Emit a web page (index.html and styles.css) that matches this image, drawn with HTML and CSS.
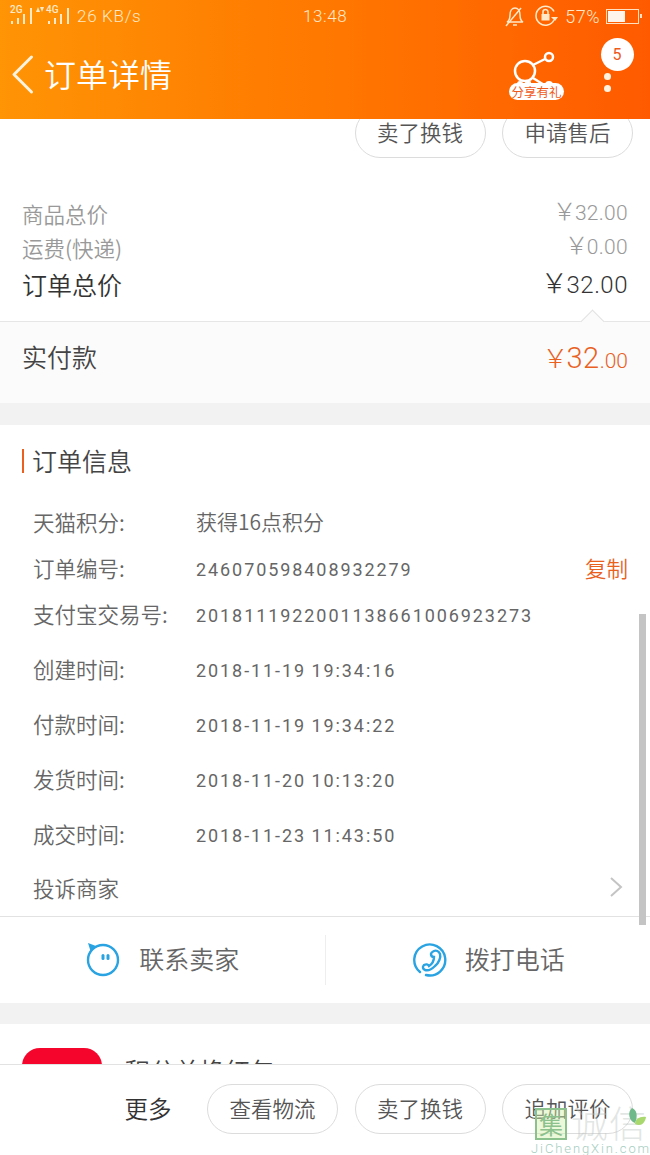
FILE: index.html
```html
<!DOCTYPE html>
<html lang="zh">
<head>
<meta charset="utf-8">
<title>订单详情</title>
<link rel="stylesheet" href="styles.css">
</head>
<body>
<div class="page">
  <header class="header">
    <div class="status">
      <svg class="signal" width="66" height="26" viewBox="0 0 66 26" fill="#ffe9c8">
        <text x="2" y="13" class="tiny">2G</text>
        <rect x="3" y="21" width="2" height="3"/><rect x="9" y="18" width="2" height="6"/><rect x="15" y="14" width="2" height="10"/><rect x="22" y="8" width="2" height="16"/>
        <path d="M28 12l2-5 2 5zM32 7l2 5 2-5z"/>
        <text x="38" y="13" class="tiny">4G</text>
        <rect x="40" y="21" width="2" height="3"/><rect x="46" y="18" width="2" height="6"/><rect x="52" y="14" width="2" height="10"/><rect x="59" y="8" width="2" height="16"/>
      </svg>
      <span class="speed">26 KB/s</span>
      <span class="clock">13:48</span>
      <svg class="bell" width="22" height="22" viewBox="0 0 22 22" fill="none" stroke="#ffe9c8" stroke-width="1.5">
        <path d="M3 17c2-1 3-3 3-7 0-4 2-7 5-7s5 3 5 7c0 4 1 6 3 7z"/><path d="M9 20h4"/><path d="M2 21L17 3"/>
      </svg>
      <svg class="lock" width="24" height="22" viewBox="0 0 24 22" fill="none" stroke="#ffe9c8" stroke-width="1.6">
        <path d="M19 15a9.500 9.500 0 1 1 0-8.500"/><path d="M16 12l4 4 3-4z" fill="#ffe9c8" stroke="none"/>
        <rect x="6.500" y="9" width="8" height="6.500" fill="#ffe9c8" stroke="none"/><path d="M8 9V7a2.500 2.500 0 0 1 5 0v2"/>
      </svg>
      <span class="battery-text">57%</span>
      <span class="battery"><span class="battery-fill"></span></span>
    </div>
    <div class="nav">
      <svg class="back" width="24" height="42" viewBox="0 0 24 42" fill="none" stroke="#fff3e0" stroke-width="3" stroke-linecap="round" stroke-linejoin="round">
        <path d="M20.500 3L3 20.500 20.500 38"/>
      </svg>
      <h1 class="nav-title">订单详情</h1>
      <div class="share">
        <svg width="56" height="52" viewBox="0 0 56 52" fill="none" stroke="#fff" stroke-width="2.500">
          <circle cx="17" cy="23" r="10"/><circle cx="41" cy="9" r="4"/><path d="M25 17l12-6"/><path d="M25 30l12 7.500"/>
          <circle cx="41" cy="37" r="4" fill="#fff" stroke="none"/><circle cx="12" cy="36" r="3" fill="#fff" stroke="none"/><circle cx="20" cy="35" r="3" fill="#fff" stroke="none"/>
        </svg>
        <span class="share-label">分享有礼</span>
      </div>
      <div class="more">
        <span class="more-badge">5</span>
        <span class="dot"></span>
        <span class="dot"></span>
      </div>
    </div>
  </header>

  <main class="content">
    <div class="top-buttons">
      <span class="pill">卖了换钱</span>
      <span class="pill">申请售后</span>
    </div>

    <section class="prices">
      <div class="price-row muted r1"><span>商品总价</span><span class="amount"><i class="yen">￥</i>32.00</span></div>
      <div class="price-row muted r2"><span>运费(快递)</span><span class="amount"><i class="yen">￥</i>0.00</span></div>
      <div class="price-row total r3"><span>订单总价</span><span class="amount big"><i class="yen">￥</i>32.00</span></div>
    </section>

    <section class="paid">
      <span class="caret"></span>
      <span class="paid-label">实付款</span>
      <span class="paid-amount"><i class="yen">￥</i><b>32</b><em>.00</em></span>
    </section>

    <div class="gap"></div>

    <section class="info">
      <h2 class="info-title">订单信息</h2>
      <div class="info-row h46"><span class="key">天猫积分:</span><span class="val">获得16点积分</span></div>
      <div class="info-row h46"><span class="key">订单编号:</span><span class="val num">246070598408932279</span><span class="copy">复制</span></div>
      <div class="info-row h46"><span class="key">支付宝交易号:</span><span class="val num">2018111922001138661006923273</span></div>
      <div class="info-row h55 first"><span class="key">创建时间:</span><span class="val num">2018-11-19 19:34:16</span></div>
      <div class="info-row h55"><span class="key">付款时间:</span><span class="val num">2018-11-19 19:34:22</span></div>
      <div class="info-row h55"><span class="key">发货时间:</span><span class="val num">2018-11-20 10:13:20</span></div>
      <div class="info-row h55"><span class="key">成交时间:</span><span class="val num">2018-11-23 11:43:50</span></div>
      <div class="info-row h54"><span class="key">投诉商家</span>
        <svg class="chev" width="14" height="22" viewBox="0 0 14 22" fill="none" stroke="#c4c4c4" stroke-width="2"><path d="M2 2l10 9-10 9"/></svg>
      </div>
    </section>

    <section class="contact">
      <div class="contact-item">
        <svg width="36" height="36" viewBox="0 0 36 36" fill="none" stroke="#29a3e2" stroke-width="2.400">
          <circle cx="18" cy="18" r="15"/>
          <path d="M3 1l8 3-5.500 5z" fill="#29a3e2" stroke="none"/>
          <rect x="16.500" y="12" width="3" height="6" rx="1.500" fill="#29a3e2" stroke="none"/><rect x="21.500" y="12" width="3" height="6" rx="1.500" fill="#29a3e2" stroke="none"/>
        </svg>
        <span>联系卖家</span>
      </div>
      <div class="contact-item">
        <svg width="36" height="36" viewBox="-2 0 36 36" fill="none" stroke="#29a3e2" stroke-width="2.400" stroke-linecap="round">
          <path d="M7 30A15.500 15.500 0 1 1 13 33"/>
          <path d="M21 9c2-1 5 0 6 3 1 3-1 9-5 12-3 3-7 5-10 4-2-1-3-3-1-5 2-1 4-1 5 1 3-2 5-6 5-9-2 0-3-1-3-3 0-1 1-2 3-3z"/>
        </svg>
        <span>拨打电话</span>
      </div>
    </section>

    <div class="gap small"></div>

    <section class="promo">
      <span class="promo-icon"></span>
      <span class="promo-text">积分兑换红包</span>
    </section>
    <div class="scrollbar"></div>
  </main>

  <footer class="footer">
    <span class="more-text">更多</span>
    <span class="pill">查看物流</span>
    <span class="pill">卖了换钱</span>
    <span class="pill">追加评价</span>
  </footer>

  <div class="watermark">
    <span class="wm-box">集</span>
    <span class="wm-text">诚信</span>
    <svg class="wm-leaf" width="20" height="22" viewBox="0 0 20 22"><path d="M5 0c5 2 6 8 3 15C2 13 0 4 5 0z" fill="#6fb98a"/><path d="M8 16c0-5 5-8 11-7-1 6-5 10-11 7z" fill="#a9d86e"/></svg>
    <span class="wm-url">JiChengXin.com</span>
  </div>
</div>
</body>
</html>
```

FILE: styles.css
```css
* { box-sizing: border-box; margin: 0; padding: 0; }
html, body { width: 650px; height: 1155px; overflow: hidden; background: #fff; }
body { font-family: "Noto Sans CJK SC", "Roboto", sans-serif; font-weight: 350; color: #444; }
i, em { font-style: normal; }
b { font-weight: 300; }

.page { position: relative; width: 650px; height: 1155px; display: flex; flex-direction: column; }

.header { height: 119px; flex: none; background: linear-gradient(90deg, #ff9405 0%, #ff7800 50%, #ff5a00 100%); color: #fff; }
.status { height: 32px; display: flex; align-items: center; padding: 0 11px 0 8px; color: #ffe9c8; font-family: "Roboto", sans-serif; font-size: 17px; position: relative; }
.signal { margin-top: -6px; }
.tiny { font-family: "Roboto", sans-serif; font-size: 10px; font-weight: 500; }
.speed { margin-left: 3px; letter-spacing: .7px; }
.clock { position: absolute; left: 303px; top: 6px; letter-spacing: .6px; }
.bell { margin-left: auto; }
.lock { margin-left: 9px; }
.battery-text { margin-left: 6px; font-size: 18px; letter-spacing: .5px; }
.battery { position: relative; margin-left: 6px; width: 33px; height: 15px; border: 1.500px solid #ffe0c0; padding: 1px; display: block; }
.battery::after { content: ""; position: absolute; right: -4px; top: 4px; width: 2px; height: 4px; background: #ffe0c0; }
.battery-fill { display: block; width: 57%; height: 100%; background: #fff4ec; }

.nav { height: 87px; display: flex; align-items: center; padding-left: 11px; position: relative; }
.back { flex: none; margin-top: -2px; }
.nav-title { font-size: 32px; font-weight: 350; color: #fff; margin-left: 9px; margin-top: -6px; line-height: 1; }
.share { margin-left: auto; position: relative; width: 56px; height: 52px; margin-right: 26px; align-self: flex-start; margin-top: 16px; }
.share svg { display: block; }
.share-label { position: absolute; left: 1px; top: 35px; width: 55px; height: 17px; border-radius: 9px; background: #fff; color: #ee5a1a; font-size: 12.500px; line-height: 17px; text-align: center; font-weight: 400; white-space: nowrap; }
.more { width: 50px; height: 87px; margin-right: 10px; position: relative; display: flex; flex-direction: column; align-items: center; justify-content: flex-end; gap: 5px; padding-bottom: 27px; padding-right: 16px; }
.more-badge { position: absolute; left: 10.500px; top: 5.500px; width: 33px; height: 33px; border-radius: 50%; background: #fff; color: #ee5a1a; font: 400 16px/33px "Roboto", sans-serif; text-align: center; }
.dot { width: 7px; height: 7px; border-radius: 50%; background: #fff3e0; }

.content { flex: 1; min-height: 0; overflow: hidden; position: relative; }
.top-buttons { display: flex; justify-content: flex-end; gap: 16.500px; padding-right: 17px; margin-top: -11px; }
.pill { flex: none; display: block; width: 131px; height: 50px; border: 1px solid #dcdcdc; border-radius: 25px; font-size: 21.500px; line-height: 45px; text-align: center; color: #555; background: #fff; }

.prices { padding: 38px 22px 0; height: 163px; }
.price-row { display: flex; justify-content: space-between; align-items: center; }
.muted { color: #999; font-size: 21.500px; height: 34px; }
.total { color: #333; font-size: 25px; height: 40px; }
.amount { font-family: "Roboto", sans-serif; font-size: 21px; letter-spacing: .3px; margin-top: -3px; font-weight: 300; }
.amount.big { font-size: 24px; margin-top: -2px; font-weight: 300; letter-spacing: .5px; }
.yen { font-family: "Noto Sans CJK SC", sans-serif; font-weight: 300; font-size: 1.150em; line-height: 1; margin-right: -2px; }

.paid { position: relative; height: 82px; background: #fbfbfb; border-top: 1px solid #e6e6e6; display: flex; justify-content: space-between; align-items: center; padding: 0 22px 13px; }
.caret { position: absolute; right: 49px; top: -9px; width: 17px; height: 17px; background: #fbfbfb; border-top: 1px solid #e2e2e2; border-left: 1px solid #e2e2e2; transform: rotate(45deg); }
.paid-label { font-size: 25px; color: #444; }
.paid-amount { color: #e9601f; font-family: "Roboto", sans-serif; font-size: 21px; margin-top: 4px; }
.paid-amount .yen { font-size: 1.250em; }
.paid-amount b { font-size: 29px; font-weight: 300; letter-spacing: .5px; }
.gap { height: 22px; background: #f2f2f2; }
.gap.small { height: 21px; }

.info { height: 491px; padding: 0 22px; }
.info-title { height: 73px; font-size: 25px; font-weight: 350; color: #444; display: flex; align-items: center; padding: 0 0 4px 10px; position: relative; }
.info-title::before { content: ""; position: absolute; left: 0; top: 24px; width: 2px; height: 24px; background: #e9601f; }
.info-row { display: flex; align-items: center; padding-left: 11px; font-size: 21.500px; color: #666; position: relative; }
.h46 { height: 46px; }
.h55 { height: 55px; }
.h54 { height: 54px; padding-bottom: 2px; }
.first { margin-top: 5px; }
.key { width: 163px; flex: none; white-space: nowrap; }
.val { white-space: nowrap; font-size: 21px; }
.num { font-family: "Roboto", sans-serif; font-size: 18px; letter-spacing: 1.920px; word-spacing: -1px; margin-top: 4px; font-weight: 400; }
.copy { margin-left: auto; color: #e9601f; font-size: 21.500px; }
.chev { margin-left: auto; margin-right: 5px; }

.contact { height: 87px; border-top: 1px solid #e2e2e2; display: flex; align-items: center; }
.contact-item { flex: 1; height: 50px; display: flex; align-items: center; justify-content: center; gap: 18px; font-size: 25px; color: #666; }
.contact-item + .contact-item { border-left: 1px solid #eee; }
.contact-item svg { flex: none; }
.contact-item span { margin-top: -4px; }

.promo { height: 60px; display: flex; padding: 24px 0 0 22px; }
.promo-icon { width: 80px; height: 60px; background: #f5052b; border-radius: 18px 18px 0 0; flex: none; }
.promo-text { margin-left: 23px; font-size: 25px; color: #444; line-height: 1; margin-top: 10px; }
.scrollbar { position: absolute; left: 639px; top: 495px; width: 7px; height: 311px; background: #c4c4c4; }

.footer { height: 91px; flex: none; border-top: 1px solid #e2e2e2; background: #fff; display: flex; align-items: center; justify-content: flex-end; gap: 16.500px; padding: 0 17px 2px 0; position: relative; }
.more-text { font-size: 23.500px; color: #333; margin-right: 19px; margin-top: -2px; }

.watermark { position: absolute; left: 531px; top: 1100px; width: 119px; height: 55px; pointer-events: none; }
.wm-box { position: absolute; left: 4px; top: 8px; width: 32px; height: 32px; border: 2px solid #8cc08c; background: rgba(210, 240, 170, .45); color: #8cc08c; font-size: 24px; line-height: 28px; text-align: center; font-weight: 400; }
.wm-text { position: absolute; left: 40px; top: 0; font-size: 37px; font-weight: 300; line-height: 44px; color: rgba(180, 190, 185, .4); letter-spacing: 1px; }
.wm-leaf { position: absolute; left: 96px; top: 8px; }
.wm-url { position: absolute; left: 0; top: 42px; font-family: "Roboto", sans-serif; font-size: 13px; line-height: 14px; letter-spacing: 1.900px; color: #a5cdc0; white-space: nowrap; }
```
